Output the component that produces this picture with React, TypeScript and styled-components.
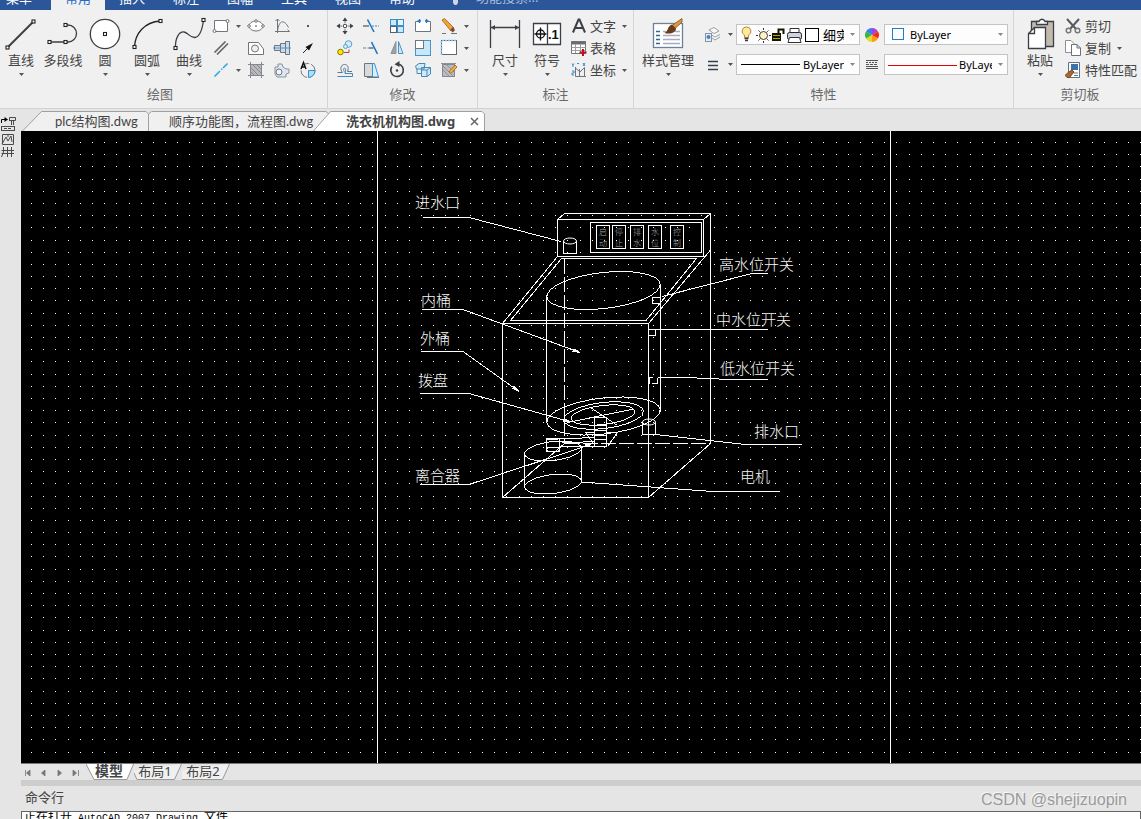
import React from 'react';
import styled, { createGlobalStyle } from 'styled-components';

const UI = '"Noto Sans", "Noto Sans CJK SC", sans-serif';

const GlobalStyle = createGlobalStyle`
  *, *::before, *::after { box-sizing: border-box; }
  body { margin: 0; background: #e5e5e5; font-family: ${UI}; font-size: 13px; color: #444; }
  button, select { font: inherit; color: inherit; border: 0; padding: 0; margin: 0; background: none; border-radius: 0; }
  svg { display: block; flex: none; }
`;

const Page = styled.div`
  height: 100vh;
  display: flex;
  flex-direction: column;
  overflow: hidden;
  position: relative;
`;

/* ---------- menu bar ---------- */
const MenuBar = styled.nav`
  flex: none;
  display: flex;
  height: 10px;
  overflow: hidden;
  background: #2b579a;
`;
const MenuTab = styled.button<{ $active?: boolean; $first?: boolean }>`
  flex: none;
  display: flex;
  align-items: flex-end;
  justify-content: ${p => (p.$first ? 'flex-start' : 'center')};
  width: ${p => (p.$first ? 51 : 54)}px;
  height: 10px;
  padding: 0 0 4px ${p => (p.$first ? 6 : 0)}px;
  line-height: 16px;
  background: ${p => (p.$active ? '#f0f0f0' : 'transparent')};
  color: ${p => (p.$active ? '#2b6cc4' : '#fff')};
`;
const MenuSearch = styled.div`
  display: flex;
  align-items: flex-end;
  gap: 18px;
  padding: 0 0 5px 24px;
  line-height: 16px;
  white-space: nowrap;
  color: #a9bcd9;
`;

/* ---------- ribbon ---------- */
const Ribbon = styled.header`
  flex: none;
  display: flex;
  height: 99px;
  background: #f0f0f0;
  border-bottom: 1px solid #d2d2d2;
`;
const Group = styled.section<{ $grow?: boolean; $pad?: string }>`
  position: relative;
  flex: ${p => (p.$grow ? '1 0 auto' : 'none')};
  display: flex;
  flex-direction: column;
  padding: ${p => p.$pad || '0'};
  &:not(:last-child) { border-right: 1px solid #d5d5d5; }
`;
const GroupBody = styled.div<{ $pad?: string }>`
  display: flex;
  height: 76px;
  padding: ${p => p.$pad || '0'};
`;
const GroupTitle = styled.h2`
  margin: 0;
  font-size: 13px;
  font-weight: 400;
  line-height: 17px;
  text-align: center;
  color: #6a6a6a;
`;
const BigButton = styled.button<{ $wide?: boolean }>`
  flex: none;
  display: flex;
  flex-direction: column;
  align-items: center;
  width: ${p => (p.$wide ? 68 : 42)}px;
  padding-top: 4px;
  line-height: 16px;
  white-space: nowrap;
`;
const BigCaret = styled.span`
  margin-top: 5px;
`;
const ToolGrid = styled.div<{ $cols: string }>`
  display: grid;
  grid-template-columns: ${p => p.$cols};
  grid-template-rows: repeat(3, 22px);
  padding-top: 5px;
`;
const ToolButton = styled.button`
  display: flex;
  align-items: center;
  justify-content: center;
`;
const RowButton = styled.button<{ $icon?: number }>`
  display: grid;
  grid-template-columns: ${p => p.$icon || 22}px auto 16px;
  align-items: center;
  justify-items: center;
  justify-content: start;
  line-height: 20px;
  white-space: nowrap;
`;
const PropColumn = styled.div`
  display: flex;
  flex-direction: column;
  gap: 9px;
  padding-top: 14px;
`;
const PropRow = styled.div`
  display: flex;
  align-items: center;
  height: 21px;
`;
const PropIcon = styled.button<{ $w: number }>`
  display: flex;
  justify-content: center;
  width: ${p => p.$w}px;
`;
const Combo = styled.label`
  display: flex;
  align-items: center;
  width: 124px;
  height: 21px;
  padding: 0 4px 0 3px;
  border: 1px solid #c4c4c4;
  background: #fdfdfd;
`;
const ComboSelect = styled.select<{ $w: number; $size?: number }>`
  appearance: none;
  width: ${p => p.$w}px;
  height: 19px;
  margin-left: auto;
  overflow: hidden;
  outline: 0;
  font-size: ${p => p.$size || 11}px;
  color: #000;
`;
const ComboCaret = styled.span`
  width: 11px;
  display: flex;
  justify-content: flex-end;
`;

/* ---------- work area ---------- */
const Body = styled.div`
  flex: 1;
  display: flex;
  min-height: 0;
`;
const SideBar = styled.aside`
  flex: none;
  width: 21px;
  padding-top: 7px;
`;
const Main = styled.main`
  flex: 1;
  min-width: 0;
  display: flex;
  flex-direction: column;
`;
const FileTabs = styled.div`
  flex: none;
  display: flex;
  height: 22px;
`;
const FileTab = styled.div<{ $w: number; $pad: number; $active?: boolean }>`
  position: relative;
  flex: none;
  display: flex;
  align-items: center;
  width: ${p => p.$w}px;
  padding: 2px 0 0 ${p => p.$pad}px;
  margin-left: ${p => (p.$active ? -16 : 0)}px;
  white-space: nowrap;
`;
const TabShape = styled.svg`
  position: absolute;
  inset: 0;
`;
const TabLabel = styled.button<{ $active?: boolean }>`
  position: relative;
  line-height: 18px;
  font-family: ${p => (p.$active ? UI : 'Lato, "Noto Sans CJK SC", sans-serif')};
  font-weight: ${p => (p.$active ? 700 : 400)};
`;
const TabClose = styled.button`
  position: relative;
  margin: 0 6px 0 auto;
`;
const Canvas = styled.div`
  flex: 1;
  min-height: 0;
  overflow: hidden;
  background: #000;
`;
const LayoutBar = styled.div`
  flex: none;
  display: flex;
  height: 17px;
  padding-left: 1px;
  border-top: 1px solid #777;
`;
const NavButton = styled.button`
  display: flex;
  align-items: center;
  justify-content: flex-start;
  padding-left: 1px;
  width: 16px;
  height: 17px;
`;
const LayoutTab = styled.button<{ $active?: boolean }>`
  position: relative;
  width: 48px;
  height: 16px;
  padding-right: ${p => (p.$active ? 2 : 6)}px;
  line-height: 16px;
  font-size: ${p => (p.$active ? 14 : 13)}px;
  font-weight: ${p => (p.$active ? 700 : 400)};
  span { position: relative; top: -1px; }
`;
const Splitter = styled.div`
  flex: none;
  height: 6px;
  background: #cdcdcd;
`;
const CommandTitle = styled.div`
  flex: none;
  height: 25px;
  padding-left: 4px;
  line-height: 22px;
`;
const CommandLog = styled.div`
  flex: none;
  height: 8px;
  overflow: hidden;
  border: 1px solid #666;
  border-bottom: 0;
  padding-left: 2px;
  background: #fff;
  color: #000;
  font-family: "Liberation Mono", "Noto Sans CJK SC", monospace;
  font-size: 12px;
  line-height: 13px;
  white-space: pre;
  span { font-size: 10px; }
`;
const Credit = styled.div`
  position: absolute;
  right: 14px;
  bottom: 9px;
  font-family: "Liberation Sans", sans-serif;
  font-size: 16px;
  line-height: 20px;
  color: #9a9a9a;
  text-shadow: -1px -1px 0 #f6f6f6;
`;

/* ---------- icons ---------- */
const INK = '#3b3f46';
const BLUE = '#2f8fd0';

const Caret = ({ color = '#555' }: { color?: string }) => (
  <svg width="5" height="3" viewBox="0 0 5 3"><path d="M0 0H5L2.500 3Z" fill={color} /></svg>
);
const Big = ({ w = 42, children }: { w?: number; children: React.ReactNode }) => (
  <svg width={w} height="38" viewBox={`0 0 ${w} 38`} fill="none" stroke={INK} strokeWidth="1.3">{children}</svg>
);
const Small = ({ children }: { children: React.ReactNode }) => (
  <svg width="20" height="20" viewBox="0 0 20 20" fill="none" stroke="#70757b" strokeWidth="1">{children}</svg>
);
const Node = ({ x, y }: { x: number; y: number }) => (
  <rect x={x - 1.5} y={y - 1.5} width="3" height="3" fill="#fff" stroke="#222" strokeWidth="1.1" />
);

const bigDraw = [
  { name: '直线', caret: true, icon: <><path d="M7.500 33.500 33.500 7.500" strokeWidth="1.900" /><Node x={7.5} y={33.5} /><Node x={33.5} y={7.5} /></> },
  { name: '多段线', caret: false, icon: <><path d="M7.500 28H26A8.500 8.500 0 0 0 26 11H23.500" /><Node x={7.5} y={28} /><Node x={23.5} y={28} /><Node x={23.5} y={11} /></> },
  { name: '圆', caret: true, icon: <><circle cx="21" cy="20" r="14.700" fill="#fff" /><Node x={21} y={20} /></> },
  { name: '圆弧', caret: true, icon: <><path d="M8.500 33C9 20 18 8 34.500 7" stroke="#222" /><Node x={8.5} y={33} /><Node x={34.5} y={7} /></> },
  { name: '曲线', caret: true, icon: <><path d="M7.500 34C7 24 11 17.500 16 18C20 18.500 22 24 27 23.500C32 22.500 34.500 14 35.500 6" /><Node x={7.5} y={34} /><Node x={35.5} y={6} /></> },
];

const drawTools: (React.ReactNode | 'caret' | null)[][] = [
  [
    <><path d="M3.500 4.500H16.500V15.500H3.500Z" fill="#fff" /><circle cx="3.500" cy="15" r="1.500" fill="#fff" /><circle cx="16.500" cy="5" r="1.500" fill="#fff" /></>,
    'caret',
    <><ellipse cx="10" cy="10" rx="7" ry="5" fill="#fff" /><circle cx="10" cy="10" r="1" fill="#888" stroke="none" /><circle cx="10" cy="5" r="1.300" fill="#fff" /><circle cx="3" cy="10" r="1.300" fill="#fff" /><circle cx="17" cy="10" r="1.300" fill="#fff" /></>,
    <path d="M5.500 3V17M3 15.500H17.500M3.500 5 5.500 3 7.500 5M15.500 13.500 17.500 15.500M5.500 15C7 4 12 3 16.500 11.500" />,
    <rect x="9" y="9" width="2" height="2" fill="#555" stroke="none" />,
  ],
  [
    <path d="M3.500 14.500 14.500 3.500M6 16.500 17 5.500" stroke="#62666c" strokeWidth="1.700" />,
    null,
    <><path d="M2.500 4.500H12.500L17.500 11V16.500H2.500Z" fill="#fff" /><circle cx="9" cy="10.500" r="3.500" fill="#eee" /></>,
    <><path d="M2.500 7.500H8.500V12.500H2.500ZM8.500 5.500H13.500V14.500H8.500ZM13.500 3.500H17.500V16.500H13.500Z" fill="#c9dff1" /><path d="M1 10H19" stroke="#5b8dbb" /></>,
    <><path d="M5 15 12 8" stroke="#222" /><path d="M15 5 7.500 9 11 12.500Z" fill="#111" stroke="none" /></>,
  ],
  [
    <path d="M3.500 16.500 9 11M10.200 9.800 11.200 8.800M12 8 16.500 3.500" stroke="#2aa7e0" strokeWidth="1.500" />,
    'caret',
    <><path d="M4.500 4.500H15.500V15.500H4.500Z" fill="#b7b9bb" /><path d="M4.500 2V18M15.500 2V18M2 4.500H18M2 15.500H18M5 8 12 15M5 12 8 15M7 5 15 13M11 5 15 9" stroke="#85888c" /></>,
    <><path d="M3 7H6V4H10L11 7 14 9H17V13L14 14V17H5L3 14Z" fill="#dfe6f2" stroke="#8a92a0" /><circle cx="7" cy="12" r="3" fill="#f4f4f4" /></>,
    <><circle cx="10" cy="10.500" r="7" strokeDasharray="10 2" stroke="#777" /><path d="M10.500 10.500H17A7 7 0 0 1 10.500 17.500Z" fill="#b4dcf5" stroke={BLUE} /><path d="M3 9 5.500 2.500 8 9M4 7H7" stroke="#111" strokeWidth="1.400" /></>,
  ],
];

const modifyTools: (React.ReactNode | 'caret')[][] = [
  [
    <><path d="M10 2.500V7M10 13V17.500M2.500 10H7M13 10H17.500" /><path d="M10 1.500 12.500 5H7.500ZM10 18.500 7.500 15H12.500ZM1.500 10 5 7.500V12.500ZM18.500 10 15 12.500V7.500Z" fill={INK} stroke="none" /><circle cx="10" cy="10" r="1.800" fill="#fff" stroke={INK} /></>,
    <><path d="M2 10H8" stroke="#333" /><path d="M11 10H18" strokeDasharray="2 1" stroke={BLUE} /><path d="M6.500 3.500 13 16" stroke="#1c77c3" strokeWidth="1.600" /></>,
    <><rect x="3.500" y="3.500" width="6" height="6" fill="#cbe8fa" stroke="#3b8fc5" /><rect x="10.500" y="3.500" width="6" height="6" fill="#e4f4fd" stroke="#3b8fc5" /><rect x="3.500" y="10.500" width="6" height="6" fill="#fff" stroke="#52606e" /><rect x="10.500" y="10.500" width="6" height="6" fill="#cbe8fa" stroke="#3b8fc5" /></>,
    <><path d="M6 5.500H2.500V15.500H17.500V5.500H14" fill="#fff" /><path d="M6.500 3V7M4.500 5H8M13.500 3V7M12 5H15.500" stroke="#1c77c3" strokeWidth="1.300" /></>,
    <><path d="M3 4 5.500 2.500 15 12 12 15Z" fill="#f0a43a" stroke="#b8701d" /><path d="M11 14 14 11 16 14 14 16.500Z" fill="#7c4b34" stroke="none" /><path d="M3 17.500H7M12 17.500H18" /></>,
    'caret',
  ],
  [
    <><circle cx="5.500" cy="14" r="2.800" fill="#ffe500" stroke="#8a7b00" /><circle cx="13.500" cy="6" r="3.300" fill="#d5ecfa" stroke="#57a0d0" /><circle cx="10.500" cy="8.500" r="2" fill="#d5ecfa" stroke="#57a0d0" /><path d="M9 14.500H14V11.500" stroke="#b5433c" /></>,
    <><path d="M2 10H5M6.500 10H8" stroke={BLUE} /><path d="M8 10H12.500" stroke="#333" /><path d="M10.500 4 16.500 16" stroke="#1c77c3" strokeWidth="1.600" /></>,
    <><path d="M9 3.500V15.500H4Z" fill="#9da1a6" stroke="#8d9196" /><path d="M11.500 3.500V15.500H16Z" fill="#d0e9f9" stroke="#4795c7" /></>,
    <><rect x="2.500" y="2.500" width="15" height="15" fill="#c7e8fa" stroke="#4a95c5" /><rect x="2.500" y="2.500" width="8" height="8" fill="#fff" /></>,
    <><rect x="2.500" y="2.500" width="15" height="14" fill="#fff" stroke="#62676d" /><path d="M2.500 17V2.500H18" stroke="#7fc1e8" strokeWidth="1.500" strokeDasharray="2 1" /></>,
    'caret',
  ],
  [
    <><path d="M2.500 12.500H7.500C4.500 9 6 4.500 9.500 4.500C13 4.500 14 7.500 12.500 11.500H17" stroke="#6d7278" /><path d="M2.500 16.500H17.500V13.500H10C11 11 11 8 9.500 8C8 8 8.500 11 10 12.500" stroke="#3c8cc1" /></>,
    <><path d="M3.500 3.500H11.500V16.500H3.500Z" fill="#d9dadb" /><path d="M11.500 3.500H13.500L17.500 17H11.500Z" fill="#d8eefb" stroke="#3a93cc" /><path d="M6 17.500H18" /></>,
    <><path d="M5 6.500A6.300 6.300 0 1 0 11 4" stroke={INK} strokeWidth="1.600" /><path d="M12.500 1 7.500 4.200 12.500 7Z" fill={INK} stroke="none" /><circle cx="10" cy="10.500" r="1.200" fill={INK} stroke="none" /></>,
    <><path d="M2.500 6 6 3.500H12L11 9H3.500ZM8.500 7.500H17.500V14L14 16.500H8.500Z" fill="#cfeafa" stroke="#4489b5" /><path d="M8.500 10H14V16.500M14 10 17.500 7.500M4 9V13.500H8" stroke="#4489b5" /></>,
    <><rect x="3.500" y="4.500" width="12" height="12" fill="#babcbe" stroke="#85888c" /><path d="M2 3.500H17M4 10 10 16M4 6 14 16M8 5 15 12" stroke="#8e9195" /><path d="M10 12 16 5 18 7 12 13.500Z" fill="#f3b04c" stroke="#a87225" /></>,
    'caret',
  ],
];

const paletteIcon = (
  <svg width="14" height="14" viewBox="0 0 14 14">
    <path d="M7 7V0A7 7 0 0 1 13 3.500Z" fill="#a344d6" /><path d="M7 7 13 3.500V10.500Z" fill="#f42a1e" />
    <path d="M7 7 13 10.500A7 7 0 0 1 7 14Z" fill="#ff9c12" /><path d="M7 7V14A7 7 0 0 1 1 10.500Z" fill="#e6d82b" />
    <path d="M7 7 1 10.500V3.500Z" fill="#37b54a" /><path d="M7 7 1 3.500A7 7 0 0 1 7 0Z" fill="#3d7cf0" />
    <path d="M13 3.500A7 7 0 0 1 13 10.500Z" fill="#f42a1e" /><path d="M1 3.500A7 7 0 0 0 1 10.500Z" fill="#37b54a" />
  </svg>
);

const layerStateIcons = (
  <svg width="80" height="19" viewBox="0 0 80 19" fill="none">
    <path d="M6.500 2A4.200 4.200 0 0 1 8.500 10V12.500H4.500V10A4.200 4.200 0 0 1 6.500 2Z" fill="#ffe9a0" stroke="#b58b32" />
    <path d="M4.500 13.500H8.500M5 15.500H8" stroke="#3c3c3c" strokeWidth="1.500" />
    <circle cx="23.500" cy="10.500" r="4" fill="#fff2cc" stroke="#443b2a" />
    <path d="M23.500 3V5M23.500 16V18M16 10.500H18M29 10.500H31M18.500 5.500 19.800 6.800M28.500 5.500 27.200 6.800M18.500 15.500 19.800 14.200M28.500 15.500 27.200 14.200" stroke="#333" />
    <rect x="32" y="8" width="9" height="8" fill="#141400" /><path d="M33 10.500H40M33 13.500H40" stroke="#b5a900" />
    <path d="M38.500 8V4.500H43.500V9" stroke="#141400" strokeWidth="2" />
    <path d="M50 8V3.500H59V8" fill="#fff" stroke="#333" /><rect x="47.500" y="7.500" width="14" height="7" rx="2" fill="#ccd4dd" stroke="#22262b" />
    <path d="M49.500 12.500H59.500L61 17.500H48Z" fill="#fff" stroke="#333" />
    <rect x="65.500" y="3.500" width="13" height="13" fill="#fff" stroke="#000" />
  </svg>
);

/* ---------- drawing ---------- */
const STEP = 12.19;
const gridDots = (() => {
  let d = '';
  for (let r = 0; r < 110; r++) {
    for (let c = 0; c < 180; c++) {
      d += `M${Math.round(10 + c * STEP)} ${Math.round(11 + r * STEP)}h1v1h-1z`;
    }
  }
  return d;
})();

const drawingLabels: [string, number, number][] = [
  ['进水口', 415, 208], ['内桶', 421, 306], ['外桶', 420, 344], ['拨盘', 418, 386], ['离合器', 415, 481],
  ['高水位开关', 719, 270], ['中水位开关', 716, 325], ['低水位开关', 720, 374], ['排水口', 754, 437], ['电机', 740, 482],
];
const panelKeys: [string, number][] = [['启动', 596], ['停止', 612], ['排水', 630], ['水位', 648], ['控制', 670]];

const Label = styled.text<{ $size: number; $dim?: boolean }>`
  font-family: "Noto Sans CJK SC", sans-serif;
  font-weight: 300;
  font-size: ${p => p.$size}px;
  fill: ${p => (p.$dim ? '#a9a9a9' : '#f4f4f4')};
`;

const Tilted = ({ x, y, rx, ry }: { x: number; y: number; rx: number; ry: number }) => (
  <ellipse cx={x} cy={y} rx={rx} ry={ry} transform={`rotate(-6.6 ${x} ${y})`} />
);

const Drawing = () => (
  <svg width="2200" height="1340" role="img" aria-label="洗衣机机构图">
    <path d={gridDots} fill="#fff" shapeRendering="crispEdges" />
    <path d="M356.500 0V1340M869.500 0V1340" stroke="#fff" />
    <g transform="translate(-21 -131)" fill="none" stroke="#fff" strokeWidth="1" shapeRendering="crispEdges">
      {/* cabinet */}
      <path d="M557.500 219.500H703.500V256.500H557.500ZM557.500 219.500 564.500 213.500H710.500V443.500M703.500 219.500 710.500 213.500" />
      <path d="M557.500 256.500 502.500 323.500H648.500L710.500 250M561.500 258.500H696.500L646 320.500H510.500Z" />
      <path d="M502.500 323.500V497.500H648.500V323.500M648.500 497.500 710.500 443.500M502.500 497.500 564.500 443.500" />
      <path d="M564.500 258.500V443.500" strokeDasharray="15 3" />
      <path d="M564.500 443.500H710.500" strokeDasharray="15 3" />
      {/* control panel */}
      <rect x="590.500" y="222.500" width="111" height="30" />
      {panelKeys.map(([, x]) => <rect key={x} x={x + 0.5} y="225.500" width="13" height="23" />)}
      {/* tub */}
      <Tilted x={603.5} y={290.5} rx={57} ry={18} />
      <path d="M546.500 295V422M660.500 284V412" />
      <Tilted x={603.5} y={416} rx={57} ry={18} />
      <Tilted x={603.5} y={415.5} rx={40} ry={13} />
      <Tilted x={603} y={415} rx={32} ry={9.5} />
      <path d="M590.500 407.500 617.500 425.500M567.500 422.500 633.500 409" />
      {/* shaft and hub */}
      <path d="M594.500 417.500H606.500V446.500H594.500ZM594.500 425.500H606.500M594.500 430.500H606.500M594.500 435.500H606.500M594.500 439.500H606.500" />
      <path d="M594.500 432.500H585.500L594.500 445M606.500 432.500H617.500L607.500 446.500M546.500 439.500 594.500 437.500M562 443 594 441.500M559.500 446.500H606.500" />
      {/* motor */}
      <rect x="546.500" y="438.500" width="13" height="13" />
      <ellipse cx="553" cy="449.500" rx="6.500" ry="2.500" />
      <Tilted x={553} y={451} rx={28.5} ry={9.5} />
      <Tilted x={553} y={484} rx={28.5} ry={9.5} />
      <path d="M524.500 453V487M581.500 448V482" />
      {/* inlet and outlet */}
      <path d="M563.500 241V253.500H576.500V241M642.500 422V434.500H655.500V422" />
      <g shapeRendering="auto">
        <ellipse cx="570" cy="241" rx="6.500" ry="3" />
        <ellipse cx="649" cy="422" rx="6.500" ry="3" />
      </g>
      {/* level switches */}
      <path d="M660 297.500H652.500V303.500H660M655.500 329.500V335.500H649M649.500 383.500V377.500H653M657.500 377.500V383.500H652" />
      {/* leaders */}
      <path d="M423 217.500H469L561 241.500M422 309.500H463L580 352.500M421 351.500H463L519 391.500M420 393.500H469L571 422M420 484.500H469L591 444.500" />
      <path d="M768 273.500H752L662 296.500M768 329.500H649M768 379.500H730L686 377.500H658M802 444.500H746L655 434.500M780 491.500H713L581 482" />
      <path d="M580 352.500 574 349 573 351.500ZM519 391.500 514 386.500 513 388.500ZM571 422 565 419 564 421.500ZM591 444.500 585 445 586 447Z" fill="#fff" />
    </g>
    <g transform="translate(-21 -131)">
      {drawingLabels.map(([t, x, y]) => <Label key={t} x={x} y={y} $size={15}>{t}</Label>)}
      {panelKeys.map(([t, x]) => (
        <React.Fragment key={t}>
          <Label x={x + 3} y={235} $size={8} $dim>{t[0]}</Label>
          <Label x={x + 3} y={246} $size={8} $dim>{t[1]}</Label>
        </React.Fragment>
      ))}
    </g>
  </svg>
);

const Tools = ({ rows, cols, label }: { rows: (React.ReactNode | 'caret' | null)[][]; cols: string; label: string }) => (
  <ToolGrid $cols={cols}>
    {rows.flatMap((row, r) => row.map((t, c) => t === null
      ? <span key={`${r}-${c}`} />
      : (
        <ToolButton key={`${r}-${c}`} aria-label={`${label} ${r + 1}-${c + 1}`}>
          {t === 'caret' ? <Caret /> : <Small>{t}</Small>}
        </ToolButton>
      )))}
  </ToolGrid>
);

export default function App() {
  return (
    <Page>
      <GlobalStyle />
      <MenuBar>
        <MenuTab $first>菜单</MenuTab>
        {['常用', '插入', '标注', '图幅', '工具', '视图', '帮助'].map((t, i) => <MenuTab key={t} $active={i === 0}>{t}</MenuTab>)}
        <MenuSearch>
          <svg width="5" height="6" viewBox="0 0 5 6"><path d="M0 0H5V4L3.500 6H1.500L0 4Z" fill="#c9d5e8" /></svg>
          <span>功能搜索...</span>
        </MenuSearch>
      </MenuBar>

      <Ribbon>
        <Group $pad="0 7px 0 0">
          <GroupBody>
            {bigDraw.map(b => (
              <BigButton key={b.name}><Big>{b.icon}</Big>{b.name}{b.caret && <BigCaret><Caret /></BigCaret>}</BigButton>
            ))}
            <Tools label="绘图" rows={drawTools} cols="22px 12px 24px 28px 24px" />
          </GroupBody>
          <GroupTitle>绘图</GroupTitle>
        </Group>

        <Group>
          <GroupBody $pad="0 7px 0 4px">
            <Tools label="修改" rows={modifyTools} cols="repeat(5, 26px) 8px" />
          </GroupBody>
          <GroupTitle>修改</GroupTitle>
        </Group>

        <Group>
          <GroupBody $pad="0 1px 0 6px">
            <BigButton>
              <Big><path d="M6.500 6V34M35.500 6V34M7 13.500H35" /><path d="M7 13.500 11 11V16ZM35 13.500 31 11V16Z" fill={INK} stroke="none" /></Big>
              尺寸<BigCaret><Caret /></BigCaret>
            </BigButton>
            <BigButton>
              <Big>
                <path d="M7.500 9.500H34.500V30.500H7.500ZM21.500 9.500V30.500" fill="#fff" /><circle cx="14.500" cy="20" r="4" stroke="#111" /><path d="M14.500 13.500V26.500M8.500 20H20.500" stroke="#111" />
                <text x="22" y="25" fontFamily="Liberation Sans, sans-serif" fontWeight="700" fontSize="13" fill="#111" stroke="none">.1</text>
              </Big>
              符号<BigCaret><Caret /></BigCaret>
            </BigButton>
            <ToolGrid $cols="64px">
              <RowButton>
                <Small><path d="M4 16.500 9.500 3.500H10.500L16 16.500M6 12H14" stroke={INK} strokeWidth="2" /></Small>文字<Caret />
              </RowButton>
              <RowButton>
                <Small><path d="M2.500 3.500H16.500V15.500H2.500Z" fill="#fff" /><path d="M2.500 3.500H16.500V6H2.500Z" fill="#676c73" /><path d="M2.500 9.500H16.500M2.500 12.500H16.500M6.500 6V15M11.500 6V15" stroke="#9a9ea3" /><path d="M14 11V18M10.500 14.500H17.500" stroke="#c00f1c" strokeWidth="2" /></Small>表格
              </RowButton>
              <RowButton>
                <Small><path d="M6.500 7V16.500H17M6.500 8 11 12 15.500 7.500V16M10.500 9V16" /><path d="M3 3.500 4 5 5 3.500M4 5V7M8 3.500H10M14 3 16 6M16 3 14 6M3 11H5V13H3V15H5" stroke={BLUE} /></Small>坐标<Caret />
              </RowButton>
            </ToolGrid>
          </GroupBody>
          <GroupTitle>标注</GroupTitle>
        </Group>

        <Group>
          <GroupBody $pad="0 5px 0 0">
            <BigButton $wide>
              <Big w={68}>
                <rect x="19.500" y="9.500" width="29" height="24" fill="#fff" stroke="#6b8299" />
                <path d="M22 17.500H26M22 21.500H26M22 25.500H26M22 29.500H26" stroke="#34648f" />
                <path d="M29 21.500H46M29 25.500H46M29 29.500H46" stroke="#a7adc4" /><path d="M29 17.500H32M41 17.500H46" stroke="#a7adc4" />
                <path d="M48 4.500 38 11.500 41 14.500 48 8Z" fill="#d69a4e" stroke="#9a6425" strokeWidth="1" />
                <path d="M38 10.500C33 12 35 17 30.500 19C36 20.500 42 19 42 14.500Z" fill="#6b3c1b" stroke="none" />
              </Big>
              样式管理<BigCaret><Caret /></BigCaret>
            </BigButton>
            <PropColumn>
              <PropRow>
                <PropIcon $w={22} aria-label="图层"><Small><path d="M6 5 11 2.500 16 6 11 8.500ZM8 9.500 12 12 17 9.500M9 13 12 15 17 12" fill="#fafafa" stroke="#9a9fa5" /><rect x="2.500" y="8.500" width="6" height="8" fill="#e6edf5" stroke="#8295a8" /><circle cx="5.500" cy="12" r="2" fill="#4c82b3" stroke="none" /></Small></PropIcon>
                <PropIcon $w={12} aria-label="图层选项"><Caret /></PropIcon>
                <Combo>
                  {layerStateIcons}
                  <ComboSelect $w={21} $size={13} aria-label="当前图层"><option>细实线层</option></ComboSelect>
                  <ComboCaret><Caret color="#888" /></ComboCaret>
                </Combo>
                <PropIcon $w={24} aria-label="颜色">{paletteIcon}</PropIcon>
                <Combo>
                  <svg width="20" height="19" viewBox="0 0 20 19"><rect x="4.500" y="3.500" width="11" height="11" fill="#fff" stroke="#1b7dcc" /></svg>
                  <ComboSelect $w={82} aria-label="颜色"><option>ByLayer</option></ComboSelect>
                  <ComboCaret><Caret color="#888" /></ComboCaret>
                </Combo>
              </PropRow>
              <PropRow>
                <PropIcon $w={22} aria-label="线型"><Small><path d="M5 6.500H15M5 10.500H15M5 14.500H15" stroke="#34404e" strokeWidth="1.300" /></Small></PropIcon>
                <PropIcon $w={12} aria-label="线型选项"><Caret /></PropIcon>
                <Combo>
                  <svg width="60" height="19" viewBox="0 0 60 19"><path d="M1 9.500H60" stroke="#000" /></svg>
                  <ComboSelect $w={41} aria-label="线型"><option>ByLayer</option></ComboSelect>
                  <ComboCaret><Caret color="#888" /></ComboCaret>
                </Combo>
                <PropIcon $w={24} aria-label="线宽">
                  <svg width="12" height="11" viewBox="0 0 12 11" stroke="#555"><path d="M0 1.500H12M0 9.500H12M0 7.500H12" /><path d="M0 3.500H12" strokeDasharray="2 1" /><path d="M0 5.500H12" strokeDasharray="3 1" /></svg>
                </PropIcon>
                <Combo>
                  <svg width="70" height="19" viewBox="0 0 70 19"><path d="M0 10.500H69" stroke="#e60000" /></svg>
                  <ComboSelect $w={33} aria-label="线宽"><option>ByLayer</option></ComboSelect>
                  <ComboCaret><Caret color="#888" /></ComboCaret>
                </Combo>
              </PropRow>
            </PropColumn>
          </GroupBody>
          <GroupTitle>特性</GroupTitle>
        </Group>

        <Group $grow $pad="0 0 0 5px">
          <GroupBody>
            <BigButton>
              <Big>
                <path d="M12.500 7.500H34.500V32.500H12.500Z" fill="#c2baad" /><path d="M17.500 10.500V7.500H20C21 4.500 25 4.500 26 7.500H28.500V10.500Z" fill="#fff" />
                <path d="M15.500 13.500H26.500V34.500H9.500V19.500ZM15.500 13.500V19.500H9.500" fill="#fff" />
              </Big>
              粘贴<BigCaret><Caret /></BigCaret>
            </BigButton>
            <ToolGrid $cols="80px">
              <RowButton $icon={24}>
                <Small><path d="M4 3 13 13M16 3 7 13" stroke="#565b60" strokeWidth="2" /><circle cx="5.500" cy="14.500" r="2.300" stroke="#777" strokeWidth="1.500" /><circle cx="14.500" cy="14.500" r="2.300" stroke="#777" strokeWidth="1.500" /></Small>剪切
              </RowButton>
              <RowButton $icon={24}>
                <Small><path d="M2.500 2.500H8L11.500 6V14.500H2.500Z" fill="#fff" stroke="#8a8e93" /><path d="M8.500 6.500H14L17.500 10V17.500H8.500ZM14 6.500V10H17.500" fill="#fff" stroke="#6d7278" /></Small>复制<Caret />
              </RowButton>
              <RowButton $icon={24}>
                <Small><path d="M5.500 2.500H16.500V17.500H5.500Z" fill="#fff" stroke="#5c738a" /><rect x="8" y="4" width="7" height="6" fill="#3d73a6" stroke="none" /><path d="M11 13H15M11 15.500H15" /><path d="M9 10 11 12 6.500 17.500C4 18 3 17 2.500 15L5 12.500Z" fill="#a9672d" stroke="#7d451b" /></Small>特性匹配
              </RowButton>
            </ToolGrid>
          </GroupBody>
          <GroupTitle>剪切板</GroupTitle>
        </Group>
      </Ribbon>

      <Body>
        <SideBar>
          <svg width="17" height="44" viewBox="0 0 17 44" fill="none" stroke="#4a4a4a">
            <path d="M1.500 7V3.500H5" stroke="#000" /><path d="M4.500 1 8 3.500 4.500 6Z" fill="#000" stroke="none" /><path d="M9.500 5V1.500H15.500V4.500H9.500M11.500 4.500V9M13.500 4.500V9" />
            <rect x="1.500" y="10.500" width="13" height="4" /><path d="M4 12.500H12" strokeDasharray="3 1" />
            <path d="M2.500 18.500H13.500V28.500H2.500ZM2 28 6 21 8 25 11 20 12 26M8 18V21" />
            <path d="M1.500 34.500H14M3.500 31V36L1.500 41M7.500 31V41M11.500 31V41M1.500 37.500H14" />
          </svg>
        </SideBar>
        <Main>
          <FileTabs>
            <FileTab $w={128} $pad={34}>
              <TabShape width="128" height="22"><path d="M1 22.500 20.500 2.500H125L127.500 5V22" fill="#f0f0f0" stroke="#a0a0a0" /></TabShape>
              <TabLabel>plc结构图.dwg</TabLabel>
            </FileTab>
            <FileTab $w={180} $pad={20}>
              <TabShape width="180" height="22"><path d="M-1 5.500 2.500 2.500H177L180 5V22.500H-1Z" fill="#f0f0f0" stroke="#a0a0a0" /></TabShape>
              <TabLabel>顺序功能图，流程图.dwg</TabLabel>
            </FileTab>
            <FileTab $w={172} $pad={33} $active>
              <TabShape width="172" height="22"><path d="M0 22.500 17.500 2.500H169L171.500 5V22.500" fill="#fff" stroke="#a0a0a0" /></TabShape>
              <TabLabel $active>洗衣机机构图.dwg</TabLabel>
              <TabClose aria-label="关闭"><svg width="9" height="9" viewBox="0 0 9 9"><path d="M1 1 8 8M8 1 1 8" stroke="#666" strokeWidth="1.500" /></svg></TabClose>
            </FileTab>
          </FileTabs>

          <Canvas><Drawing /></Canvas>

          <LayoutBar>
            {['M2.500 1V7M7 1V7L3.500 4Z', 'M6 1V7L2.500 4Z', 'M3 1V7L6.500 4Z', 'M2 1V7L5.500 4ZM7.500 1V7'].map((d, i) => (
              <NavButton key={d} aria-label={['首页', '上一页', '下一页', '末页'][i]}>
                <svg width="9" height="8" viewBox="0 0 9 8"><path d={d} fill="#777" stroke="#777" strokeWidth="0.800" /></svg>
              </NavButton>
            ))}
            <LayoutTab $active>
              <TabShape width="48" height="16"><path d="M0 0 8 15.500H41L47.500 0" fill="#fff" stroke="#999" /></TabShape>
              <span>模型</span>
            </LayoutTab>
            <LayoutTab>
              <TabShape width="48" height="16"><path d="M-1 7 3 15.500H40.500L47.500 0" fill="#f0f0f0" stroke="#999" /></TabShape>
              <span>布局1</span>
            </LayoutTab>
            <LayoutTab>
              <TabShape width="48" height="16"><path d="M-4 7 0 15.500H40.500L47.500 0" fill="#f0f0f0" stroke="#999" /></TabShape>
              <span>布局2</span>
            </LayoutTab>
          </LayoutBar>
          <Splitter />
          <CommandTitle>命令行</CommandTitle>
          <CommandLog>正在打开<span> AutoCAD 2007 Drawing </span>文件</CommandLog>
        </Main>
      </Body>
      <Credit>CSDN @shejizuopin</Credit>
    </Page>
  );
}
